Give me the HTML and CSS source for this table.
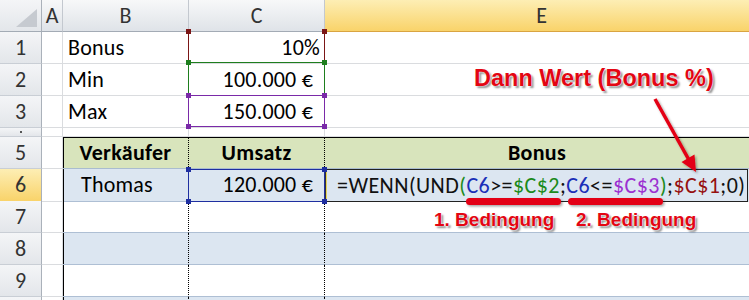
FILE: index.html
```html
<!DOCTYPE html>
<html>
<head>
<meta charset="utf-8">
<link rel="stylesheet" href="styles.css">
</head>
<body>
<div class="sheet">
  <div class="row hdr">
    <div class="c rh corner"><span class="tri"></span></div>
    <div class="c colh">A</div>
    <div class="c colh">B</div>
    <div class="c colh">C</div>
    <div class="c colh sel">E</div>
  </div>
  <div class="row">
    <div class="c rh">1</div><div class="c"></div><div class="c">Bonus</div><div class="c num">10%</div><div class="c"></div>
  </div>
  <div class="row">
    <div class="c rh">2</div><div class="c"></div><div class="c">Min</div><div class="c num eur">100.000 €</div><div class="c"></div>
  </div>
  <div class="row">
    <div class="c rh">3</div><div class="c"></div><div class="c">Max</div><div class="c num eur">150.000 €</div><div class="c"></div>
  </div>
  <div class="row r4">
    <div class="c rh"><span class="dot"></span></div><div class="c"></div><div class="c"></div><div class="c"></div><div class="c"></div>
  </div>
  <div class="row">
    <div class="c rh">5</div><div class="c"></div><div class="c tb th first top">Verkäufer</div><div class="c tc th top">Umsatz</div><div class="c te th top">Bonus</div>
  </div>
  <div class="row">
    <div class="c rh selrow">6</div><div class="c"></div><div class="c tb band ind">Thomas</div><div class="c tc band num eur">120.000 €</div>
    <div class="c te band edcell">
      <div class="editor"><span class="k">=WENN(UND</span><span class="g">(</span><span class="b">C6</span><span class="k">&gt;=</span><span class="g">$C$2</span><span class="k">;</span><span class="b">C6</span><span class="k">&lt;=</span><span class="p">$C$3</span><span class="g">)</span><span class="k">;</span><span class="r">$C$1</span><span class="k">;0)</span></div>
    </div>
  </div>
  <div class="row">
    <div class="c rh">7</div><div class="c"></div><div class="c tb"></div><div class="c tc"></div><div class="c te"></div>
  </div>
  <div class="row">
    <div class="c rh">8</div><div class="c"></div><div class="c tb band"></div><div class="c tc band"></div><div class="c te band"></div>
  </div>
  <div class="row">
    <div class="c rh">9</div><div class="c"></div><div class="c tb"></div><div class="c tc"></div><div class="c te"></div>
  </div>
  <div class="row">
    <div class="c rh"></div><div class="c"></div><div class="c tb band"></div><div class="c tc band"></div><div class="c te band"></div>
  </div>

  <div class="ref ref-red"><i class="h tl"></i><i class="h tr"></i><i class="h bl"></i><i class="h br"></i></div>
  <div class="ref ref-green"><i class="h tl"></i><i class="h tr"></i><i class="h bl"></i><i class="h br"></i></div>
  <div class="ref ref-purple"><i class="h tl"></i><i class="h tr"></i><i class="h bl"></i><i class="h br"></i></div>
  <div class="ref ref-blue"><i class="h tl"></i><i class="h tr"></i><i class="h bl"></i><i class="h br"></i></div>

  <svg class="marks" width="749" height="300" viewBox="0 0 749 300">
    <defs>
      <filter id="sh" x="-20%" y="-20%" width="140%" height="140%">
        <feDropShadow dx="1.5" dy="1.5" stdDeviation="1" flood-color="#000" flood-opacity="0.35"/>
      </filter>
    </defs>
    <g filter="url(#sh)" fill="#e30613" stroke="none">
      <line x1="655" y1="99" x2="689" y2="160" stroke="#e30613" stroke-width="3.5"/>
      <polygon points="696,172 681.5,162 694.5,154.5"/>
      <rect x="466" y="198" width="95" height="7" rx="3.5"/>
      <rect x="568" y="198" width="95" height="7" rx="3.5"/>
    </g>
  </svg>

  <div class="note n-dann">Dann Wert (Bonus %)</div>
  <div class="note small n-b1">1. Bedingung</div>
  <div class="note small n-b2">2. Bedingung</div>
</div>
</body>
</html>
```

FILE: styles.css
```css
html, body {
  margin: 0;
  padding: 0;
  background: #fff;
}
body {
  overflow: hidden;
  font-family: Carlito, "Open Sans", Lato, sans-serif;
}
.sheet {
  position: relative;
  width: 749px;
  height: 300px;
  overflow: hidden;
}
.row {
  display: grid;
  grid-template-columns: 42px 21px 126px 136px 434px;
  height: 32px;
}
.c {
  box-sizing: border-box;
  border-right: 1px solid #dadcdf;
  border-bottom: 1px solid #dadcdf;
  font-size: 22px;
  letter-spacing: 0.2px;
  line-height: 31px;
  padding: 0 5px;
  white-space: nowrap;
  overflow: hidden;
  color: #000;
}
.num { text-align: right; padding-right: 4px; }
.eur { padding-right: 11px; }
.ind { padding-left: 18px; }

/* headers */
.rh {
  background: linear-gradient(#f4f5f7, #e3e6ea);
  border-right: 1px solid #aab1ba;
  border-bottom: 1px solid #c9ced5;
  text-align: center;
  color: #333;
  padding: 0;
  letter-spacing: 0;
}
.hdr .c { line-height: 31px; padding-top: 0; }
.colh {
  background: linear-gradient(#f7f8f9, #dfe3e8);
  border-right: 1px solid #c3c8cf;
  border-bottom: 1px solid #a3abb5;
  text-align: center;
  color: #333;
  padding: 0;
  letter-spacing: 0;
}
.colh.sel, .rh.selrow {
  background: linear-gradient(#fdeeb4, #f9d36a);
  border-bottom-color: #d9a441;
  color: #333;
}
.corner {
  display: flex;
  justify-content: flex-end;
  align-items: flex-end;
  border-bottom-color: #a3abb5;
}
.hdr .corner { padding: 0 4px 4px 0; }
.tri {
  display: block;
  width: 21px;
  height: 18px;
  background: #c6cad0;
  clip-path: polygon(100% 0, 100% 100%, 0 100%);
}
.r4 { height: 9px; }
.r4 .c { line-height: 8px; }
.r4 .rh { display: flex; justify-content: center; align-items: center; }
.dot { display: block; width: 2px; height: 2px; background: #555; }

/* table */
.tb, .tc, .te { border-bottom-color: #aebfd4; }
.tb {
  border-right: 1px dotted #000;
  box-shadow: inset 1px 0 0 #000;
}
.tc { border-right: 1px dotted #000; }
.th {
  background: #d8e4bc;
  font-weight: bold;
  text-align: center;
  border-bottom-color: #a9bccf;
  letter-spacing: 0.3px;
}
.th.top { box-shadow: inset 0 1px 0 #000; }
.th.first { box-shadow: inset 1px 1px 0 #000; }
.th.te { padding-right: 14px; }
.band { background: #dce6f1; }

.edcell {
  padding: 0;
  overflow: visible;
  border-bottom: none;
}
.editor {
  box-sizing: border-box;
  width: 423px;
  height: 33px;
  border: 1px solid #222;
  border-left: 1px solid #333;
  background: #dce6f1;
  padding-left: 11px;
  line-height: 31px;
  font-size: 22px;
  letter-spacing: 0.45px;
  white-space: nowrap;
  box-shadow: inset 1px 0 0 #e8d45a;
}
.k { color: #111; }
.g { color: #1b8a1b; }
.b { color: #1a2fb8; }
.p { color: #9b30d0; }
.r { color: #961010; }

/* reference range boxes */
.ref {
  position: absolute;
  left: 188px;
  width: 137px;
  box-sizing: border-box;
  border: 1px solid;
}
.ref-red { top: 31px; height: 32px; border-color: #7b1616; border-top-color: transparent; color: #7b1616; }
.ref-green { top: 62px; height: 34px; border-color: #1e7e1e; color: #1e7e1e; }
.ref-purple { top: 95px; height: 32px; border-color: #7a2aa8; color: #7a2aa8; }
.ref-blue { top: 169px; height: 33px; border-color: #1f2fa0; color: #1f2fa0; }
.h {
  position: absolute;
  width: 5px;
  height: 5px;
  background: currentColor;
}
.h.tl { left: -3px; top: -3px; }
.h.tr { right: -3px; top: -3px; }
.h.bl { left: -3px; bottom: -3px; }
.h.br { right: -3px; bottom: -3px; }

/* annotations */
.marks {
  position: absolute;
  left: 0;
  top: 0;
}
.note {
  position: absolute;
  font-family: "Liberation Sans", Arial, sans-serif;
  font-weight: bold;
  color: #e30613;
  white-space: nowrap;
  line-height: 1;
  font-size: 23.5px;
  text-shadow: 0 0 1px #fff, 0 0 2px #fff, 2px 2px 2px rgba(0,0,0,0.45);
}
.note.small { font-size: 19px; }
.n-dann { left: 474px; top: 67px; }
.n-b1 { left: 434px; top: 210px; }
.n-b2 { left: 576px; top: 210px; }
```
